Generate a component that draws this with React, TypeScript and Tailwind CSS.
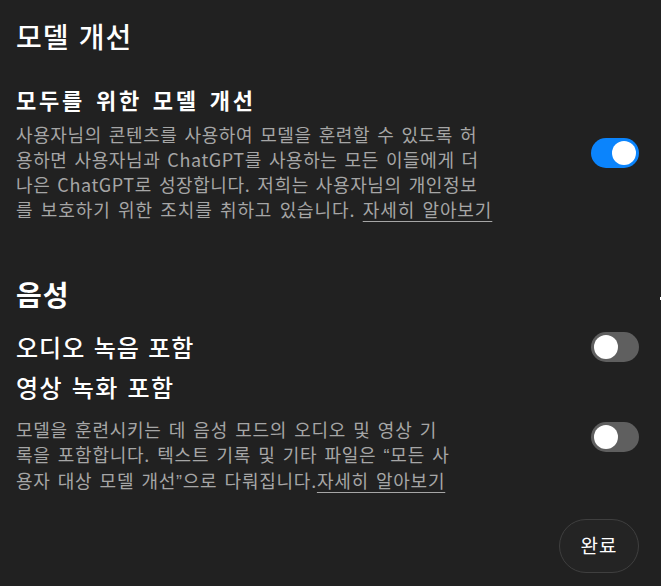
import React from "react";

function Toggle({ on }: { on: boolean }) {
  return (
    <div
      className={
        on
          ? "flex h-[30px] w-[48px] shrink-0 items-center justify-end rounded-full bg-[#0b84fc] px-[3px]"
          : "flex h-[30px] w-[48px] shrink-0 items-center justify-start rounded-full bg-[#5f5f5f] px-[3px]"
      }
    >
      <div className="size-[24px] rounded-full bg-white" />
    </div>
  );
}

function Quote({ children }: { children: React.ReactNode }) {
  return <span className="font-['Liberation_Sans',sans-serif]">{children}</span>;
}

export default function App() {
  return (
    <div className="relative h-[586px] w-[661px] overflow-hidden bg-[#212121] pl-4 pr-[22px] pt-[18px] font-['Noto_Sans_CJK_KR','Noto_Sans',sans-serif] text-white">
      <h1 className="text-[28px] leading-[36px] font-medium tracking-[1px] [word-spacing:2px]">모델 개선</h1>

      <div className="mt-[30px] flex items-center justify-between">
        <div className="flex flex-col">
          <h2 className="text-[22px] leading-[30px] font-semibold tracking-[2.8px] [word-spacing:3px]">
            모두를 위한 모델 개선
          </h2>
          <p className="mt-[8px] whitespace-nowrap text-[18px] leading-[25px] tracking-[0.6px] text-[#a6a6a6] [word-spacing:2.4px]">
            사용자님의 콘텐츠를 사용하여 모델을 훈련할 수 있도록 허<br />
            용하면 사용자님과 ChatGPT를 사용하는 모든 이들에게 더<br />
            나은 ChatGPT로 성장합니다. 저희는 사용자님의 개인정보<br />
            <span className="tracking-[0.9px]">
              를 보호하기 위한 조치를 취하고 있습니다.{" "}
              <span className="underline underline-offset-4">자세히 알아보기</span>
            </span>
          </p>
        </div>
        <Toggle on />
      </div>

      <h1 className="mt-[54px] text-[28px] leading-[36px] font-bold tracking-[1px]">음성</h1>

      <div className="mt-[20px] flex items-center justify-between">
        <h3 className="text-[24px] leading-[30px] font-medium tracking-[1px] [word-spacing:2px]">
          오디오 녹음 포함
        </h3>
        <Toggle on={false} />
      </div>

      <div className="mt-[10px] flex items-center justify-between">
        <div className="flex flex-col">
          <h3 className="text-[24px] leading-[30px] font-medium tracking-[1.4px] [word-spacing:2px]">
            영상 녹화 포함
          </h3>
          <p className="mt-[15px] whitespace-nowrap text-[18px] leading-[24.5px] tracking-[0.75px] text-[#a6a6a6] [word-spacing:2.4px]">
            모델을 훈련시키는 데 음성 모드의 오디오 및 영상 기<br />
            록을 포함합니다. 텍스트 기록 및 기타 파일은 <Quote>“</Quote>모든 사<br />
            용자 대상 모델 개선<Quote>”</Quote>으로 다뤄집니다.
            <span className="underline underline-offset-4">자세히 알아보기</span>
          </p>
        </div>
        <div className="mt-[8px]">
          <Toggle on={false} />
        </div>
      </div>

      <div className="mt-[24px] flex justify-end">
        <button className="h-[54px] w-[80px] rounded-full border border-[#3f3f3f] bg-[#242424] text-[19px] tracking-[1px] text-white">
          완료
        </button>
      </div>

      <div className="absolute right-0 top-[297px] h-[3px] w-[1px] bg-white" />
    </div>
  );
}
